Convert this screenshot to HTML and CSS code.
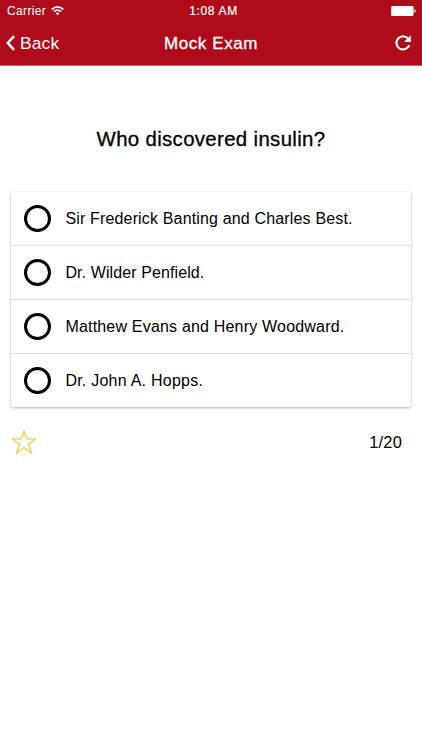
FILE: index.html
```
<!DOCTYPE html>
<html lang="en">
<head>
<meta charset="utf-8">
<title>Mock Exam</title>
<link rel="stylesheet" href="styles.css">
</head>
<body>
<header class="header">
  <div class="status">
    <div class="carrier"><span>Carrier</span>
      <svg class="wifi" width="13" height="10" viewBox="0 0 13 10" fill="none" stroke="#fff" stroke-width="1.7"><path d="M.7 3.5Q6.5-1.6 12.3 3.5M2.8 5.7Q6.5 2.4 10.2 5.7"/><path d="M4.5 7.2Q6.5 5.6 8.5 7.2L6.5 9.3Z" fill="#fff" stroke="none"/></svg>
    </div>
    <span class="time">1:08 AM</span>
    <svg class="battery" width="25" height="10" viewBox="0 0 25 10"><rect x=".2" y="0" width="22.3" height="10" rx="1" fill="#fff"/><path d="M23.2 3.2Q24.6 3.4 24.6 5T23.2 6.8Z" fill="#fff"/></svg>
  </div>
  <nav class="nav">
    <a class="back"><svg class="chevron" width="9" height="16" viewBox="0 0 9 16" fill="none" stroke="#fff" stroke-width="2.5"><path d="M8 1.2 1.8 8 8 14.8"/></svg><span>Back</span></a>
    <h1 class="title">Mock Exam</h1>
    <svg class="refresh" width="16" height="16" viewBox="0 0 16 16"><path d="M13.4 4A6.6 6.6 0 1 0 14.3 10.1" fill="none" stroke="#fff" stroke-width="2.1"/><path d="M15.8.2V7H9Z" fill="#fff"/></svg>
  </nav>
</header>
<main class="content">
  <h2 class="question">Who discovered insulin?</h2>
  <ul class="options">
    <li class="option"><i class="radio"></i><span class="label l1">Sir Frederick Banting and Charles Best.</span></li>
    <li class="option"><i class="radio"></i><span class="label l2">Dr. Wilder Penfield.</span></li>
    <li class="option"><i class="radio"></i><span class="label l3">Matthew Evans and Henry Woodward.</span></li>
    <li class="option"><i class="radio"></i><span class="label l4">Dr. John A. Hopps.</span></li>
  </ul>
  <div class="footer">
    <svg width="26" height="26" viewBox="0 0 26 26" fill="none" stroke="#f7ca35" stroke-width="1.2"><path d="M13 2 15.8 10H24.6L17.5 15.2 20.4 24 13 18.6 5.6 24 8.5 15.2 1.4 10H10.2Z"/></svg>
    <span class="count">1/20</span>
  </div>
</main>
</body>
</html>
```
FILE: styles.css
```
* { box-sizing: border-box; }
body { margin: 0; background: #fff; color: #000; font-family: "Liberation Sans", Arial, sans-serif; }
.header { height: 66px; background: #b00b1b; color: #fff; border-bottom: 1px solid #d8616b; }
.status { height: 22px; padding: 0 6px 0 7px; display: grid; grid-template-columns: 1fr auto 1fr; align-items: center; font-size: 12px; }
.carrier { display: flex; align-items: center; gap: 5px; letter-spacing: .35px; }
.wifi { margin-top: -1px; }
.time { letter-spacing: .65px; -webkit-text-stroke: .2px; margin-left: 4px; }
.battery { justify-self: end; }
.nav { height: 43px; padding: 0 11px 0 6px; display: grid; grid-template-columns: 1fr auto 1fr; align-items: center; }
.back { display: flex; align-items: center; gap: 5px; font-size: 17.4px; letter-spacing: .15px; }
.chevron { margin-top: -2px; }
.title { margin: 0 0 0 5px; font-size: 17px; font-weight: 400; letter-spacing: .6px; -webkit-text-stroke: .3px; }
.refresh { justify-self: end; margin-top: -2px; }
.content { padding: 0 10px; }
.question { margin: 0; padding: 61px 0 41px; font-size: 20.4px; line-height: 24px; font-weight: 400; text-align: center; -webkit-text-stroke: .3px; letter-spacing: .34px; }
.options { list-style: none; margin: 0 0 0 1px; padding: 0; width: 400px; border-radius: 2px; box-shadow: 0 1px 3px rgba(0,0,0,.3); }
.option { height: 54px; display: flex; align-items: center; gap: 14px; padding-left: 13px; border-bottom: 1px solid #dedede; }
.option:last-child { border-bottom: 0; height: 53px; }
.radio { width: 27px; height: 27px; border: 3px solid #000; border-radius: 50%; }
.label { font-size: 16px; padding-left: .4px; letter-spacing: .16px; }
.l2 { letter-spacing: .1px; }
.l3 { letter-spacing: .19px; }
.l4 { letter-spacing: .24px; }
.footer { display: flex; justify-content: space-between; align-items: center; padding: 22px 10px 0 1px; }
.count { font-size: 16.4px; letter-spacing: .2px; }
```
